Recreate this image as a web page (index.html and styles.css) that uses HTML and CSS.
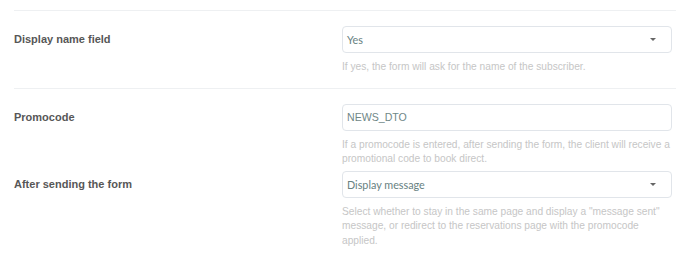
FILE: index.html
```html
<!DOCTYPE html>
<html lang="en">
<head>
    <meta charset="UTF-8">
    <meta name="viewport" content="width=device-width, initial-scale=1.0">
    <title>Newsletter form settings</title>
    <link rel="stylesheet" href="styles.css">
</head>
<body>

    <!-- Settings form -->
    <div class="settings">

        <div class="form-row divided">
            <label class="form-label">Display name field</label>
            <div class="form-field">
                <div class="select-box">
                    <span class="select-value">Yes</span>
                    <span class="caret"></span>
                </div>
                <p class="help">If yes, the form will ask for the name of the subscriber.</p>
            </div>
        </div>

        <div class="form-row divided">
            <label class="form-label">Promocode</label>
            <div class="form-field">
                <input type="text" class="text-input" value="NEWS_DTO">
                <p class="help">If a promocode is entered, after sending the form, the client will receive a promotional code to book direct.</p>
            </div>
        </div>

        <div class="form-row tight">
            <label class="form-label">After sending the form</label>
            <div class="form-field">
                <div class="select-box">
                    <span class="select-value">Display message</span>
                    <span class="caret"></span>
                </div>
                <p class="help">Select whether to stay in the same page and display a "message sent" message, or redirect to the reservations page with the promocode applied.</p>
            </div>
        </div>

    </div>

</body>
</html>
```

FILE: styles.css
```css
/* Page */
body {
    margin: 0;
    padding: 10px 12px 0 14px;
    background-color: #fff;
    font-family: 'Liberation Sans', Arial, sans-serif;
}

.settings {
    width: 662px;
}

/* Rows */
.form-row {
    display: grid;
    grid-template-columns: 328px 330px;
}

.form-row.divided {
    border-top: 1px solid #eef0f2;
    padding-top: 15px;
}

.form-row.divided:first-child {
    padding-bottom: 13px;
}

.form-row.tight {
    margin-top: 4px;
}

.form-label {
    font-size: 11px;
    font-weight: bold;
    color: #575757;
    line-height: 27px;
}

/* Controls */
.select-box,
.text-input {
    box-sizing: border-box;
    width: 330px;
    height: 27px;
    border: 1px solid #e1e5ea;
    border-radius: 4px;
    background-color: #fff;
}

.select-box {
    display: flex;
    align-items: center;
    justify-content: space-between;
    padding: 0 15px 0 4px;
}

.select-value {
    font-family: Lato, sans-serif;
    font-size: 10.8px;
    color: #678181;
}

.caret {
    width: 0;
    height: 0;
    border-left: 3px solid transparent;
    border-right: 3px solid transparent;
    border-top: 3px solid #666;
}

.text-input {
    display: block;
    padding: 0 4px;
    font-family: 'Liberation Sans', Arial, sans-serif;
    font-size: 10.6px;
    color: #6f8787;
    outline: none;
}

.help {
    margin: 7px 0 0;
    padding-right: 2px;
    font-size: 10.2px;
    line-height: 14.5px;
    color: #c6c6c6;
}
```
